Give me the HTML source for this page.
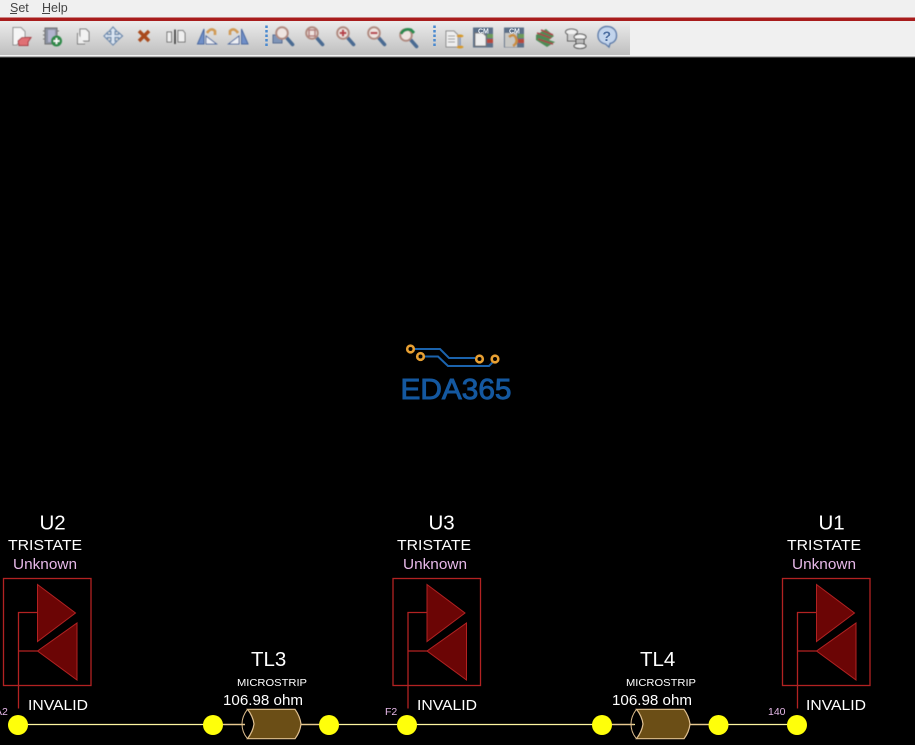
<!DOCTYPE html>
<html><head><meta charset="utf-8">
<style>
html,body{margin:0;padding:0;width:915px;height:745px;overflow:hidden;background:#000}
svg{position:absolute;left:0;top:0;display:block}
text{font-family:"Liberation Sans",sans-serif}
</style></head>
<body>
<svg width="915" height="745" viewBox="0 0 915 745" xmlns="http://www.w3.org/2000/svg">
<defs>
<filter id="soft" x="-5%" y="-5%" width="110%" height="110%"><feGaussianBlur stdDeviation="0.45"/></filter>
<filter id="soft2" x="-5%" y="-5%" width="110%" height="110%"><feGaussianBlur stdDeviation="0.25"/></filter>
<linearGradient id="tb" x1="0" y1="0" x2="0" y2="1"><stop offset="0" stop-color="#ececec"/><stop offset="1" stop-color="#bfbfbf"/></linearGradient>
<g id="lens"><line x1="4" y1="4" x2="10.500" y2="11.500" stroke="#4a6a92" stroke-width="3.600" stroke-linecap="round"/><circle cx="0" cy="0" r="5.800" fill="#efe4e0" stroke="#b08a80" stroke-width="2"/></g>
<g id="chip">
<rect x="0" y="0" width="87.500" height="107" fill="none" stroke="#b22222" stroke-width="1.300"/>
<path d="M15 130V34H34M15 72.500H34" fill="none" stroke="#b22222" stroke-width="1.300"/>
<path d="M34 6L72 34.500L34 63Z M73.500 44.500V101.500L34 72.500Z" fill="#6b0505" stroke="#b22222" stroke-width="1"/>
</g>
<g id="tl">
<path d="M1.500 0H49Q54 7 55 14.700Q54 23 49 29.400H1.500Q7 22 8 14.700Q7 7 1.500 0Z" fill="#6b4e16" stroke="#e0c090" stroke-width="1.200"/>
<path d="M1.500 0Q-4 7 -4 14.700Q-4 23 1.500 29.400" fill="none" stroke="#e0c090" stroke-width="1"/>
</g>
</defs>

<!-- menu -->
<rect x="0" y="0" width="915" height="17.500" fill="#f0f0f0"/>
<text x="10" y="12" font-size="12.500" fill="#444">Set</text><rect x="10" y="13" width="7" height="1" fill="#444"/>
<text x="42" y="12" font-size="12.500" fill="#444">Help</text><rect x="42" y="13" width="8" height="1" fill="#444"/>
<rect x="0" y="17.500" width="915" height="3.500" fill="#a81c1c"/>
<!-- toolbar -->
<rect x="0" y="21" width="915" height="34" fill="#f0f0f0"/>
<rect x="0" y="21" width="630" height="34" fill="url(#tb)"/>
<rect x="0" y="55" width="915" height="1.500" fill="#f5f5f5"/>
<rect x="0" y="56.500" width="915" height="1" fill="#777"/>

<!-- toolbar icons -->
<g filter="url(#soft)">
<path d="M13 27.500H21L25 31.500V37L20 40L17 45H13Z" fill="#f5f5f5" stroke="#8d8d8d"/>
<path d="M18 41L22 37.500H31L28 42V45.500H19Z" fill="#e06f75" stroke="#a63a42"/>
<path d="M45 28H57V44H45Z" fill="#8b92a0" stroke="#707070"/><path d="M43 31H45M43 35H45M43 39H45M57 31H59" stroke="#777"/><path d="M48 30H55V42H48Z" fill="#b2b4cf"/>
<circle cx="56.500" cy="41" r="5.500" fill="#2d8a48"/><path d="M53.500 41H59.500M56.500 38V44" stroke="#fff" stroke-width="1.700"/>
<path d="M80 29H86L89 32V41H80Z" fill="#f2f2f2" stroke="#777"/><path d="M77.500 33V44H85" fill="#eee" stroke="#777"/>
<path d="M113 27L117 31.500H115V34.500H118.500V32.500L122.500 36L118.500 39.500V37.500H115V41H117L113 45L109 41H111V37.500H107.500V39.500L104 36L107.500 32.500V34.500H111V31.500H109Z" fill="#dce6f2" stroke="#6a88ac" stroke-width="1.200"/>
<path d="M139 31L149 41M149 31L139 41" stroke="#a9481d" stroke-width="3.400"/>
<path d="M167 32H171.500V42H167ZM178 30.500H183L185 33V42H178Z" fill="#efefef" stroke="#707070"/><path d="M175 29.500V44" stroke="#333" stroke-width="1.500"/>
<path d="M197.500 44L204 29V44Z" fill="#6f8fc8" stroke="#4a68a0"/><path d="M206 44V36L216.500 44Z" fill="#eef0f4" stroke="#4a68a0"/>
<path d="M207 33Q211 27 215 31L215 35" fill="none" stroke="#d09a55" stroke-width="2.600"/>
<path d="M248 44L241.500 29V44Z" fill="#6f8fc8" stroke="#4a68a0"/><path d="M239 44V36L228.500 44Z" fill="#eef0f4" stroke="#4a68a0"/>
<path d="M238 33Q234 27 230 31L230 35" fill="none" stroke="#d09a55" stroke-width="2.600"/>
<rect x="273" y="35" width="9" height="8" fill="#7e94b8" stroke="#566c92"/>
<use href="#lens" x="282" y="33"/>
<use href="#lens" x="312" y="33"/><rect x="309" y="30" width="6" height="6" fill="none" stroke="#b07a78" stroke-width="1.500"/>
<use href="#lens" x="343" y="33"/><path d="M339.500 33H346.500M343 29.500V36.500" stroke="#b8404a" stroke-width="2.200"/>
<use href="#lens" x="374" y="33"/><path d="M370.500 33H377.500" stroke="#b8404a" stroke-width="2.200"/>
<use href="#lens" x="406" y="35"/><path d="M401 34Q404 28 411 30L414 33" fill="none" stroke="#2c8a50" stroke-width="3"/>
<path d="M446 31H454L458 35V47H446Z" fill="#eee" stroke="#888"/><path d="M448 36H455M448 39H455M448 42H455" stroke="#999"/>
<path d="M460 37V47" stroke="#7e94b8" stroke-width="1.500"/><ellipse cx="460" cy="36" rx="3.500" ry="1.500" fill="#d59a2a"/><ellipse cx="460" cy="47" rx="3.500" ry="1.500" fill="#d59a2a"/>
<rect x="473" y="27.500" width="20" height="20" fill="#5c6f88"/><rect x="487" y="34" width="6" height="4" fill="#6d9b5a"/><rect x="487" y="39" width="6" height="4" fill="#b8483a"/>
<path d="M475 33H483L486 36V46H475Z" fill="#eee" stroke="#777"/>
<rect x="504" y="27.500" width="20" height="20" fill="#5c6f88"/><rect x="518" y="34" width="6" height="4" fill="#6d9b5a"/><rect x="518" y="39" width="6" height="4" fill="#b8483a"/>
<rect x="505" y="33" width="12" height="14" fill="#c8c8c4"/>
<path d="M509 37Q514 33 516 38Q518 43 513 46" fill="none" stroke="#c98f3f" stroke-width="2.600"/>
<path d="M536 35L546 29L554 36L549 40L555 42L547 47L536 40Z" fill="#4d8a55"/>
<path d="M537 33L551 38M538 39L553 44M541 30L553 35" stroke="#a8424a" stroke-width="1.500"/>
<ellipse cx="571.500" cy="32" rx="6" ry="3" fill="#f0f0f0" stroke="#555"/><path d="M567.500 34V41H576V34" fill="#ccc" stroke="#555"/>
<ellipse cx="580" cy="37" rx="6" ry="3" fill="#f4f4f4" stroke="#444"/><path d="M576 39H584V45H576Z" fill="#bbb" stroke="#444"/><ellipse cx="580" cy="46" rx="6" ry="2.500" fill="#eee" stroke="#444"/>
<path d="M607 26.500C613.500 26.500 616.500 31 616.500 35.500C616.500 40.500 613 43 610 43.500L609 47L605.500 44C601 43 598 40 598 35.500C598 30.500 601.500 26.500 607 26.500Z" fill="#c2d4ec" stroke="#5878a8" stroke-width="1.400"/>
</g>
<g>
<text x="478" y="33.500" font-size="7" font-weight="bold" fill="#e8eef5" font-family="Liberation Mono">CM</text>
<text x="509" y="33.500" font-size="7" font-weight="bold" fill="#e8eef5" font-family="Liberation Mono">CM</text>
<text x="602.500" y="41" font-size="14" font-weight="bold" fill="#4f70a2">?</text>
</g>
<path d="M266.500 25.500V46" stroke="#4a8ad0" stroke-width="2.500" stroke-dasharray="2.500 2"/>
<path d="M434.500 25.500V46" stroke="#4a8ad0" stroke-width="2.500" stroke-dasharray="2.500 2"/>

<!-- logo -->
<g fill="none" stroke="#1b63ad" stroke-width="2">
<path d="M414 349H440L449 358H475"/>
<path d="M424 356.500H438L448 366H489L493 362"/>
</g>
<g fill="#000" stroke="#e8a033" stroke-width="2.600">
<circle cx="410.500" cy="349" r="3.300"/><circle cx="420.500" cy="356.500" r="3.300"/><circle cx="479.500" cy="359" r="3.300"/><circle cx="495" cy="359" r="3.300"/>
</g>
<text x="400.500" y="399" font-size="28.500" fill="#1458a0" stroke="#1458a0" stroke-width="0.900" textLength="111" lengthAdjust="spacingAndGlyphs">EDA365</text>

<!-- wires -->
<path d="M18 724.500H245M300 724.500H407H635M690 724.500H797" stroke="#fdf5a0" stroke-width="1.300"/>
<path d="M213 724.500H245M300 724.500H329M602 724.500H634M689 724.500H718" stroke="#e8c890" stroke-width="1.300"/>

<!-- chips -->
<use href="#chip" x="3.500" y="578.500"/>
<use href="#chip" x="393" y="578.500"/>
<use href="#chip" x="782.500" y="578.500"/>

<!-- transmission lines -->
<use href="#tl" x="246" y="709.300"/>
<use href="#tl" x="635" y="709.300"/>

<!-- nodes -->
<g fill="#ffff0a">
<circle cx="18" cy="725" r="10"/><circle cx="213" cy="725" r="10"/><circle cx="329" cy="725" r="10"/><circle cx="407" cy="725" r="10"/><circle cx="602" cy="725" r="10"/><circle cx="718.500" cy="725" r="10"/><circle cx="797" cy="725" r="10"/>
</g>

<!-- labels -->
<g fill="#fff" filter="url(#soft2)">
<text x="39.500" y="529.500" font-size="20.500">U2</text>
<text x="8" y="550" font-size="14.500" textLength="74" lengthAdjust="spacingAndGlyphs">TRISTATE</text>
<text x="28" y="710" font-size="14.500" textLength="60" lengthAdjust="spacingAndGlyphs">INVALID</text>
<text x="428.500" y="529.500" font-size="20.500">U3</text>
<text x="397" y="550" font-size="14.500" textLength="74" lengthAdjust="spacingAndGlyphs">TRISTATE</text>
<text x="417" y="710" font-size="14.500" textLength="60" lengthAdjust="spacingAndGlyphs">INVALID</text>
<text x="818.500" y="529.500" font-size="20.500">U1</text>
<text x="787" y="550" font-size="14.500" textLength="74" lengthAdjust="spacingAndGlyphs">TRISTATE</text>
<text x="806" y="710" font-size="14.500" textLength="60" lengthAdjust="spacingAndGlyphs">INVALID</text>
<text x="251" y="666" font-size="20.500">TL3</text>
<text x="237" y="686" font-size="10.500" textLength="70" lengthAdjust="spacingAndGlyphs">MICROSTRIP</text>
<text x="223" y="705" font-size="14.500" textLength="80" lengthAdjust="spacingAndGlyphs">106.98 ohm</text>
<text x="640" y="666" font-size="20.500">TL4</text>
<text x="626" y="686" font-size="10.500" textLength="70" lengthAdjust="spacingAndGlyphs">MICROSTRIP</text>
<text x="612" y="705" font-size="14.500" textLength="80" lengthAdjust="spacingAndGlyphs">106.98 ohm</text>
</g>
<g fill="#e6b8e8" filter="url(#soft2)">
<text x="13" y="569" font-size="14.500" textLength="64" lengthAdjust="spacingAndGlyphs">Unknown</text>
<text x="403" y="569" font-size="14.500" textLength="64" lengthAdjust="spacingAndGlyphs">Unknown</text>
<text x="792" y="569" font-size="14.500" textLength="64" lengthAdjust="spacingAndGlyphs">Unknown</text>
<text x="-5" y="715" font-size="10.500">A2</text>
<text x="385" y="715" font-size="10.500">F2</text>
<text x="768" y="715" font-size="10.500">140</text>
</g>
</svg>
</body></html>
